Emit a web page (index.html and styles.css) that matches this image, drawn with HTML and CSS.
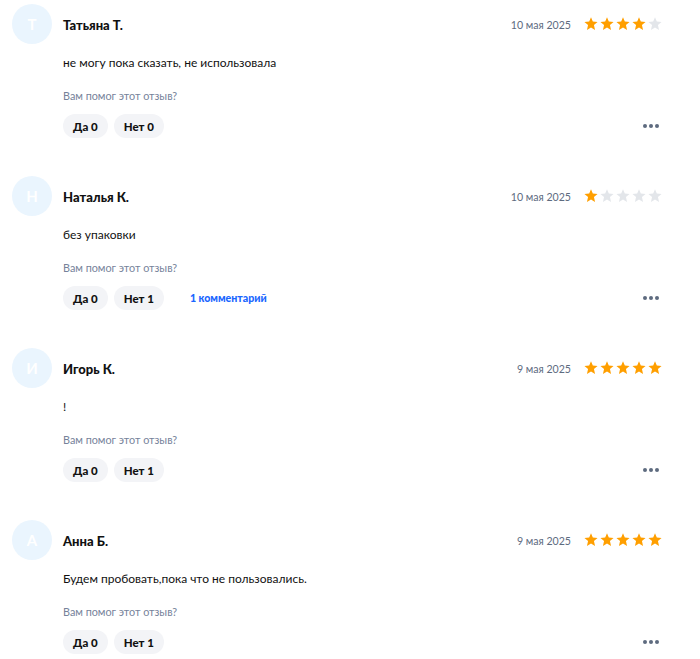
FILE: index.html
```html
<!DOCTYPE html>
<html lang="ru">
<head>
<meta charset="utf-8">
<link rel="stylesheet" href="styles.css">
</head>
<body>
<div class="reviews">
  <div class="review">
    <div class="head">
      <div class="avatar">Т</div>
      <div class="name">Татьяна Т.</div>
      <div class="date">10 мая 2025</div>
      <div class="stars"><i class="s on"></i><i class="s on"></i><i class="s on"></i><i class="s on"></i><i class="s"></i></div>
    </div>
    <div class="body">
      <p class="text">не могу пока сказать, не использовала</p>
      <p class="ask">Вам помог этот отзыв?</p>
      <div class="actions">
        <span class="btn">Да 0</span><span class="btn">Нет 0</span>
        <span class="more"><b></b><b></b><b></b></span>
      </div>
    </div>
  </div>
  <div class="review">
    <div class="head">
      <div class="avatar">Н</div>
      <div class="name">Наталья К.</div>
      <div class="date">10 мая 2025</div>
      <div class="stars"><i class="s on"></i><i class="s"></i><i class="s"></i><i class="s"></i><i class="s"></i></div>
    </div>
    <div class="body">
      <p class="text">без упаковки</p>
      <p class="ask">Вам помог этот отзыв?</p>
      <div class="actions">
        <span class="btn">Да 0</span><span class="btn">Нет 1</span>
        <span class="comments">1 комментарий</span>
        <span class="more"><b></b><b></b><b></b></span>
      </div>
    </div>
  </div>
  <div class="review">
    <div class="head">
      <div class="avatar">И</div>
      <div class="name">Игорь К.</div>
      <div class="date">9 мая 2025</div>
      <div class="stars"><i class="s on"></i><i class="s on"></i><i class="s on"></i><i class="s on"></i><i class="s on"></i></div>
    </div>
    <div class="body">
      <p class="text">!</p>
      <p class="ask">Вам помог этот отзыв?</p>
      <div class="actions">
        <span class="btn">Да 0</span><span class="btn">Нет 1</span>
        <span class="more"><b></b><b></b><b></b></span>
      </div>
    </div>
  </div>
  <div class="review">
    <div class="head">
      <div class="avatar">А</div>
      <div class="name">Анна Б.</div>
      <div class="date">9 мая 2025</div>
      <div class="stars"><i class="s on"></i><i class="s on"></i><i class="s on"></i><i class="s on"></i><i class="s on"></i></div>
    </div>
    <div class="body">
      <p class="text">Будем пробовать,пока что не пользовались.</p>
      <p class="ask">Вам помог этот отзыв?</p>
      <div class="actions">
        <span class="btn">Да 0</span><span class="btn">Нет 1</span>
        <span class="more"><b></b><b></b><b></b></span>
      </div>
    </div>
  </div>
</div>
</body>
</html>
```
FILE: styles.css
```css
* { box-sizing: border-box; }
body {
  margin: 0;
  background: #fff;
  font-family: Lato, "Noto Sans", sans-serif;
  color: #111;
}
.reviews {
  padding: 4px 38px 0 12px;
  display: flex;
  flex-direction: column;
  gap: 38px;
}
.head {
  display: flex;
  align-items: center;
  height: 40px;
}
.avatar {
  width: 40px;
  height: 40px;
  border-radius: 50%;
  background: #eaf5fe;
  color: #fff;
  display: flex;
  align-items: center;
  justify-content: center;
  font-size: 15px;
  font-weight: 700;
  margin-right: 11px;
}
.name {
  font-size: 13px;
  font-weight: 900;
  flex: 1;
  padding-top: 1px;
}
.date {
  font-size: 10.6px;
  color: #5e6b7f;
  margin-right: 13px;
  padding-top: 1px;
}
.stars {
  display: flex;
  gap: 2px;
}
.s {
  width: 14px;
  height: 14px;
  background: #e3e6ea;
  clip-path: polygon(50% 2%, 63% 33%, 97% 36%, 71% 58%, 79% 93%, 50% 75%, 21% 93%, 29% 58%, 3% 36%, 37% 33%);
  border-radius: 2px;
}
.s.on { background: #ff9f00; }
.body {
  padding-left: 51px;
}
.text {
  margin: 10px 0 0;
  font-size: 12px;
  line-height: 18px;
}
.ask {
  margin: 16px 0 0;
  font-size: 10.8px;
  line-height: 16px;
  color: #76829a;
}
.actions {
  margin-top: 10px;
  display: flex;
  align-items: center;
  gap: 6px;
}
.btn {
  height: 24px;
  padding: 0 10px;
  border-radius: 12px;
  background: #f3f4f7;
  font-size: 11.5px;
  font-weight: 900;
  display: flex;
  align-items: center;
}
.comments {
  margin-left: 20px;
  color: #1a66ff;
  font-size: 10.6px;
  font-weight: 900;
}
.more {
  margin-left: auto;
  display: flex;
  gap: 2px;
  padding-right: 3px;
}
.more b {
  width: 4px;
  height: 4px;
  border-radius: 50%;
  background: #5e6b7f;
}
```
